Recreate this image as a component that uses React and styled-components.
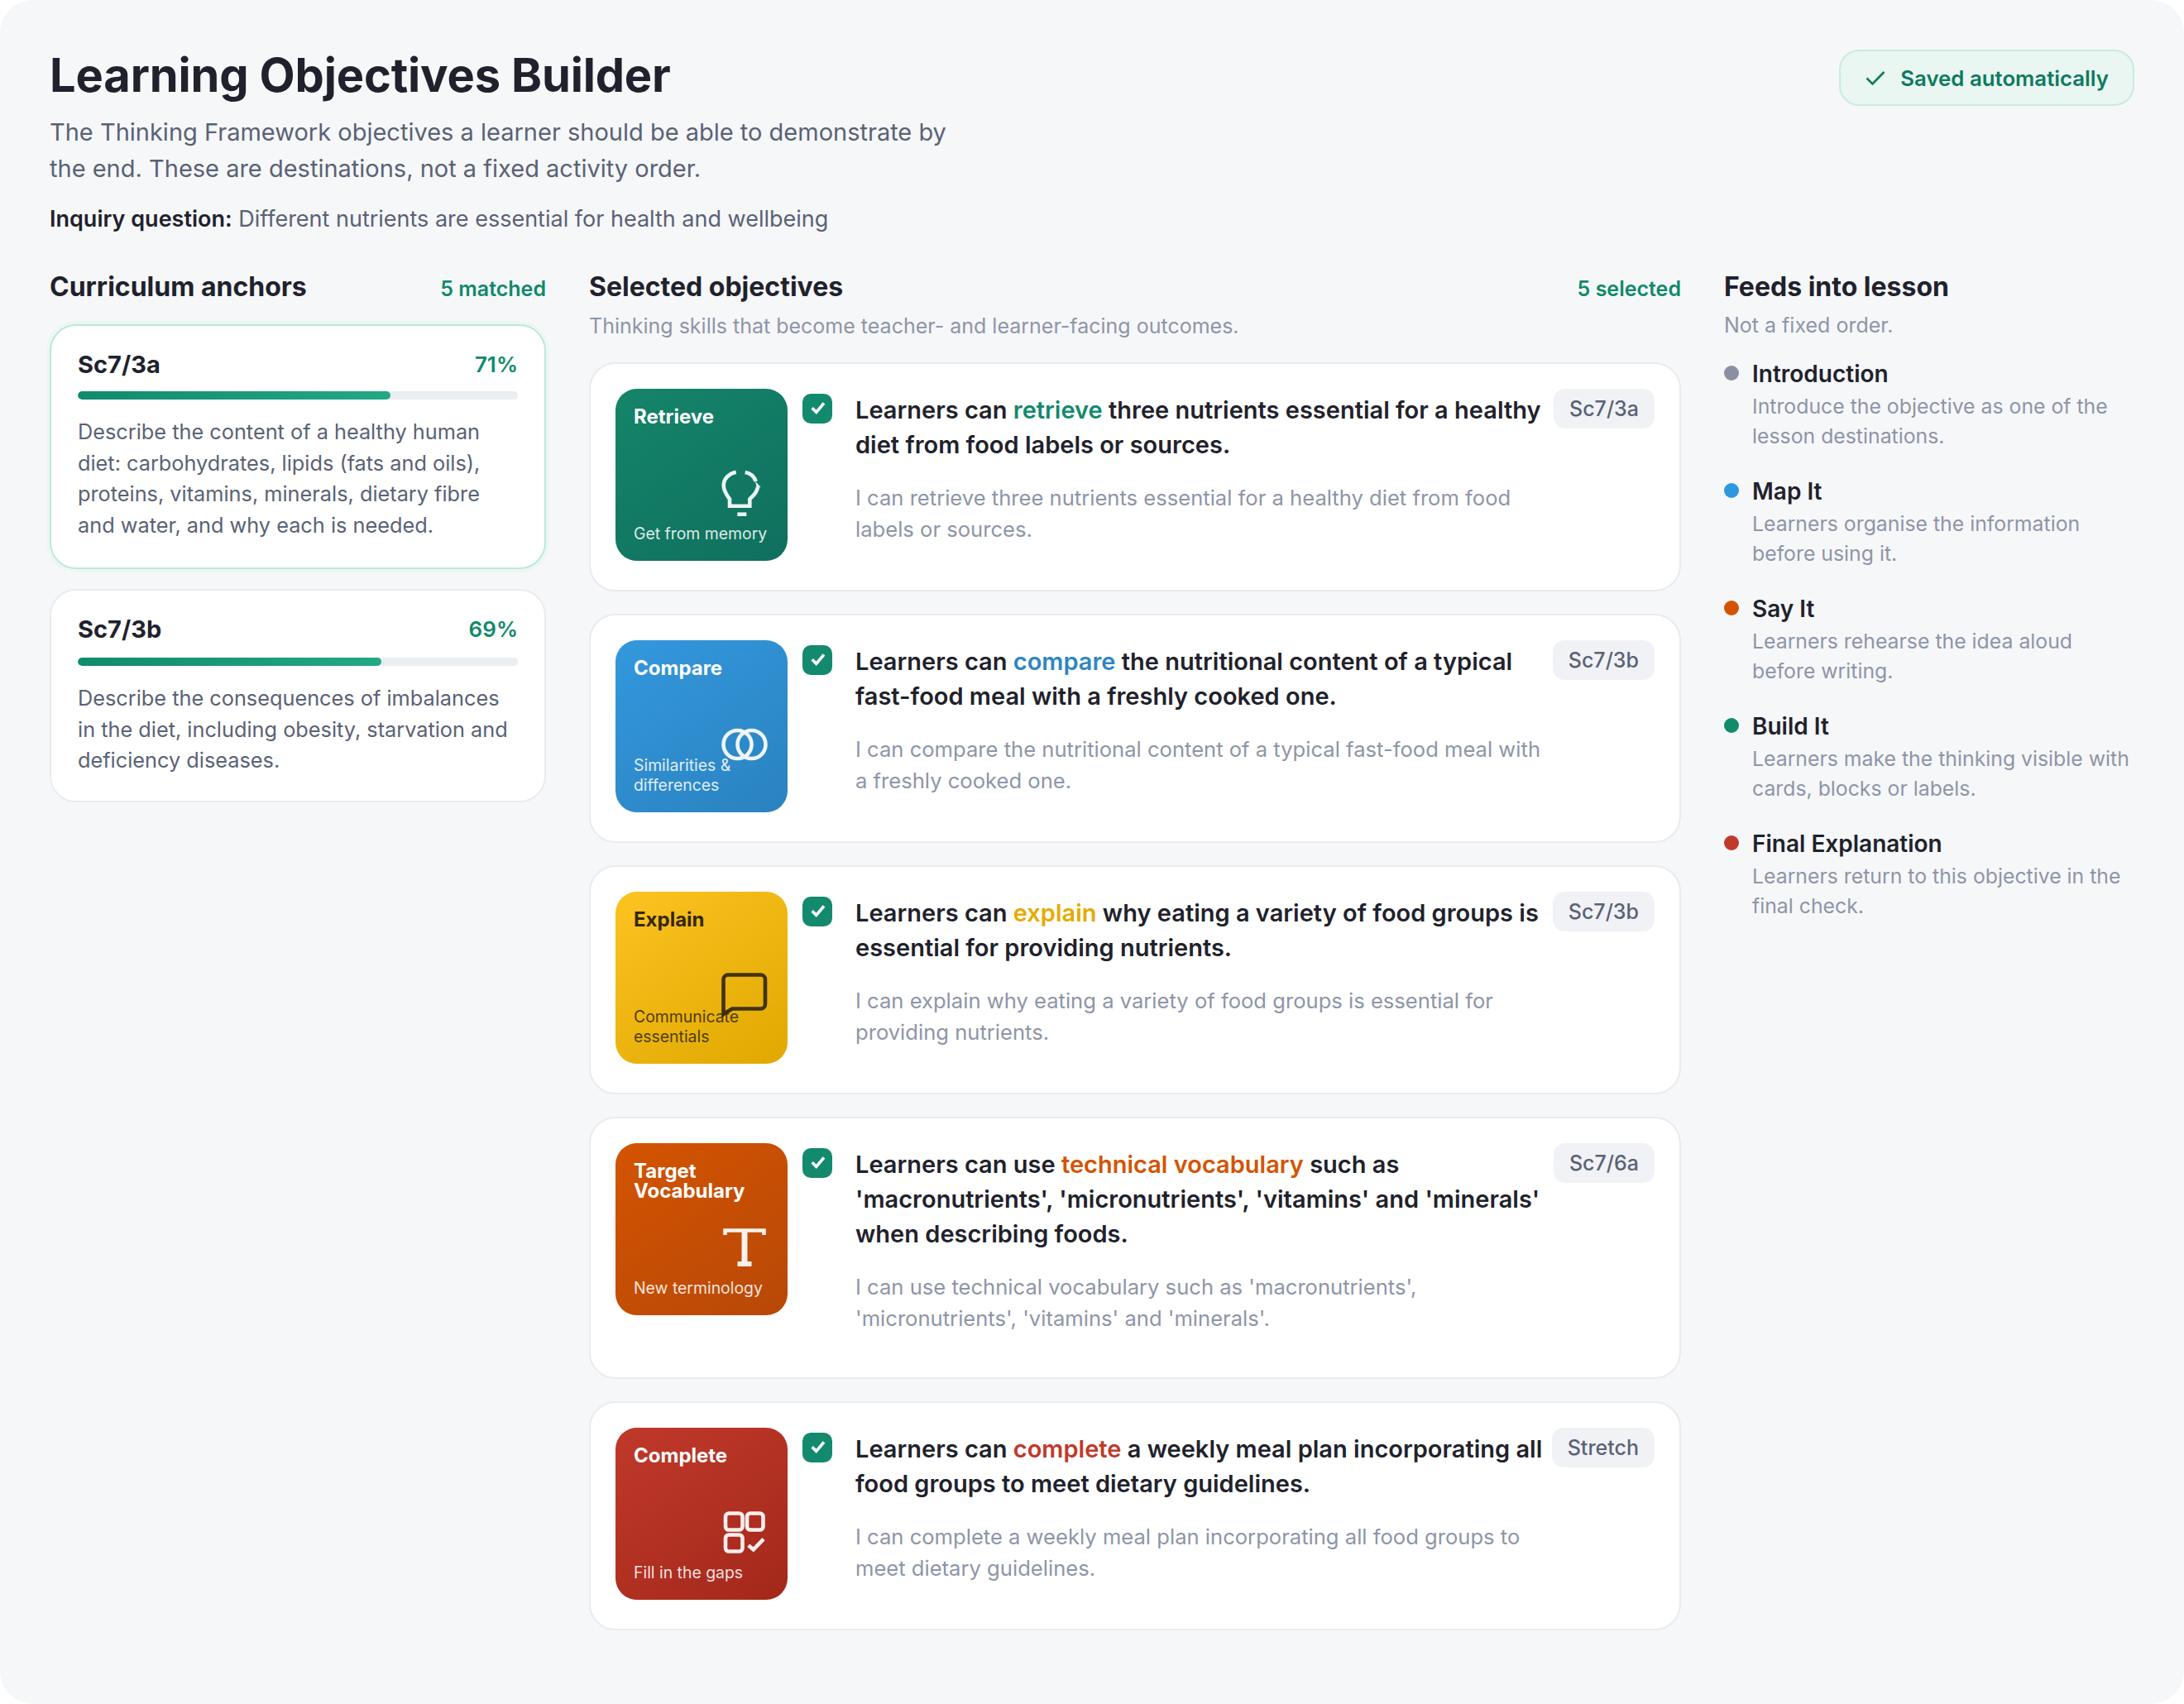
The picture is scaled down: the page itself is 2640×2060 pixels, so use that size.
import React from "react";
import styled, { createGlobalStyle } from "styled-components";

const Global = createGlobalStyle`
  html, body { margin: 0; padding: 0; background: #ffffff; }
  * { box-sizing: border-box; }
  body { font-family: "Inter", "Noto Sans", sans-serif; font-optical-sizing: none; }
`;

const Page = styled.div`
  width: 2640px;
  height: 2060px;
  background: #f6f7f9;
  border-radius: 40px;
  padding: 60px;
  overflow: hidden;
`;
const Header = styled.header`
  display: flex;
  justify-content: space-between;
  align-items: flex-start;
`;
const HeaderText = styled.div`
  max-width: 1120px;
`;
const Title = styled.h1`
  margin: 0;
  font-size: 56px;
  line-height: 62px;
  font-weight: 700;
  letter-spacing: -0.15px;
  color: #1f222c;
`;
const Lead = styled.p`
  margin: 16px 0 0;
  font-size: 29px;
  line-height: 44px;
  color: #5a6275;
`;
const Inquiry = styled.p`
  margin: 19px 0 0;
  font-size: 27px;
  line-height: 40px;
  color: #5a6275;
  strong { color: #1f222c; font-weight: 600; }
`;
const SavedBadge = styled.div`
  display: flex;
  align-items: center;
  gap: 18px;
  height: 68px;
  padding: 0 29px 0 30px;
  background: #e9f6f1;
  border: 2px solid #c9ebdf;
  border-radius: 24px;
  color: #0e7a5f;
  font-size: 25.800px;
  font-weight: 600;
`;
const Columns = styled.div`
  display: grid;
  grid-template-columns: 600px 1fr 496px;
  gap: 52px;
  margin-top: 40px;
  align-items: start;
`;
const Column = styled.section`
  min-width: 0;
`;
const ColumnHead = styled.div`
  display: flex;
  justify-content: space-between;
  align-items: baseline;
  height: 44px;
`;
const ColumnTitle = styled.h2`
  margin: 0;
  font-size: 32px;
  line-height: 44px;
  font-weight: 700;
  color: #1f222c;
`;
const Count = styled.span`
  font-size: 25px;
  font-weight: 600;
  color: #0f8a6a;
`;
const ColumnNote = styled.p`
  margin: 6px 0 0;
  font-size: 25px;
  line-height: 38px;
  color: #8e95a8;
`;
const StageNote = styled(ColumnNote)`
  line-height: 36px;
`;
const AnchorList = styled.div`
  display: flex;
  flex-direction: column;
  gap: 24px;
  margin-top: 23px;
`;
const AnchorCard = styled.article`
  background: #fff;
  border: 2px solid ${(p) => (p.$active ? "#bde8da" : "#e9ebef")};
  box-shadow: ${(p) => (p.$active ? "0 0 0 4px #ecf7f3" : "none")};
  border-radius: 32px;
  padding: 26px 32px ${(p) => (p.$active ? "33px" : "30px")};
`;
const AnchorHead = styled.div`
  display: flex;
  justify-content: space-between;
  align-items: center;
  height: 40px;
`;
const AnchorCode = styled.span`
  font-size: 29px;
  font-weight: 700;
  color: #1f222c;
`;
const AnchorPct = styled.span`
  font-size: 26px;
  font-weight: 600;
  color: #0f8a6a;
`;
const Track = styled.div`
  height: 10px;
  margin-top: ${(p) => (p.$active ? "13px" : "15px")};
  border-radius: 5px;
  background: #eaeef1;
  overflow: hidden;
`;
const Fill = styled.div`
  height: 100%;
  border-radius: 5px;
  background: linear-gradient(90deg, #118a6d, #23a886);
`;
const AnchorText = styled.p`
  margin: 20px 0 0;
  font-size: 25.300px;
  line-height: 37.500px;
  color: #5a6275;
`;
const ObjectiveList = styled.div`
  display: flex;
  flex-direction: column;
  gap: 27px;
  margin-top: 25px;
`;
const ObjectiveCard = styled.article`
  display: flex;
  align-items: flex-start;
  min-height: 277px;
  background: #fff;
  border: 2px solid #e9ebef;
  border-radius: 32px;
  padding: 30px;
`;
const Tile = styled.div`
  position: relative;
  flex: none;
  display: flex;
  flex-direction: column;
  justify-content: space-between;
  width: 208px;
  height: 208px;
  padding: 22px 22px 21px;
  border-radius: 26px;
  background: linear-gradient(145deg, ${(p) => p.$from}, ${(p) => p.$to});
  color: ${(p) => p.$ink};
`;
const TileTitle = styled.div`
  font-size: 24px;
  line-height: 24px;
  font-weight: 700;
`;
const TileNote = styled.div`
  font-size: 19.400px;
  line-height: 24px;
  opacity: 0.85;
`;
const TileIcon = styled.svg`
  position: absolute;
  top: 98px;
  right: 24px;
  width: 56px;
  height: 56px;
  opacity: 0.92;
  fill: none;
  stroke: currentColor;
  stroke-width: 4.600;
`;
const Check = styled.div`
  flex: none;
  display: flex;
  align-items: center;
  justify-content: center;
  width: 36px;
  height: 36px;
  margin: 6px 28px 0 18px;
  border-radius: 10px;
  background: #138a6e;
`;
const ObjectiveBody = styled.div`
  flex: 1;
  min-width: 0;
  padding: 5px 0 22px;
`;
const ObjectiveTitle = styled.h3`
  margin: 0;
  font-size: 29px;
  line-height: 42px;
  font-weight: 600;
  color: #1f222c;
`;
const Verb = styled.span`
  color: ${(p) => p.$color};
`;
const ObjectiveNote = styled.p`
  margin: 24px 0 0;
  font-size: 25.600px;
  line-height: 38px;
  color: #8e95a8;
`;
const CodePill = styled.span`
  flex: none;
  margin-left: 6px;
  display: flex;
  align-items: center;
  height: 48px;
  padding: 0 19px;
  border-radius: 14px;
  background: #f1f2f6;
  color: #5a6275;
  font-size: 25px;
  font-weight: 500;
`;
const Stages = styled.div`
  display: flex;
  flex-direction: column;
  gap: 28px;
  margin-top: 20px;
`;
const Stage = styled.div`
  display: grid;
  grid-template-columns: 18px 1fr;
  column-gap: 16px;
`;
const Dot = styled.span`
  width: 18px;
  height: 18px;
  margin-top: 11px;
  border-radius: 50%;
  background: ${(p) => p.$color};
`;
const StageName = styled.div`
  font-size: 28px;
  line-height: 42px;
  font-weight: 600;
  color: #1f222c;
`;
const StageText = styled.div`
  grid-column: 2;
  font-size: 24.800px;
  line-height: 36px;
  color: #8e95a8;
`;

const icons = {
  bulb: (
    <>
      <path d="M17.700 2.700C9 4.500 2.700 10.700 2.700 18.700c0 6.500 3.500 11.500 7.300 16.600v8.400h24.300v-8.400c3-3.200 8-6 9.700-14.300" />
      <path d="M28.700 3c6 1 11 5 13 11" />
      <path d="M41 13.700 47.700 21l-5 .7z" fill="currentColor" stroke="none" />
      <path d="M19.300 53.700h11" />
    </>
  ),
  venn: (
    <>
      <circle cx="19.500" cy="28" r="17" />
      <circle cx="36.500" cy="28" r="17" />
    </>
  ),
  bubble: <path d="M2.500 50V8a5.500 5.500 0 0 1 5.500-5.500h39.500a5.500 5.500 0 0 1 5.500 5.500v30a5.500 5.500 0 0 1-5.500 5.500H13z" />,
  type: (
    <>
      <path d="M4.500 13V7.500h47V13" />
      <path d="M28 7.500V48" strokeWidth="7" />
      <path d="M19.500 48h17" strokeWidth="6" />
    </>
  ),
  grid: (
    <>
      <rect x="5" y="5.500" width="20.500" height="20" rx="4" />
      <rect x="31" y="5.500" width="19.500" height="20" rx="4" />
      <rect x="5" y="31.500" width="20.500" height="20" rx="4" />
      <path d="M32.700 44.300l6 5L51 36.700" />
    </>
  ),
};

const objectives = [
  {
    tile: "Retrieve", note: "Get from memory", icon: "bulb", from: "#158569", to: "#0f6f5e", ink: "#ffffff", verbColor: "#118a6d",
    verb: "retrieve", before: "Learners can ", after: " three nutrients essential for a healthy diet from food labels or sources.",
    sub: "I can retrieve three nutrients essential for a healthy diet from food labels or sources.", code: "Sc7/3a",
  },
  {
    tile: "Compare", note: "Similarities & differences", icon: "venn", from: "#3398dd", to: "#2a82c0", ink: "#ffffff", verbColor: "#2e86c1",
    verb: "compare", before: "Learners can ", after: " the nutritional content of a typical fast-food meal with a freshly cooked one.",
    sub: "I can compare the nutritional content of a typical fast-food meal with a freshly cooked one.", code: "Sc7/3b",
  },
  {
    tile: "Explain", note: "Communicate essentials", icon: "bubble", from: "#fcc322", to: "#e0a800", ink: "#33280a", verbColor: "#e5ab00",
    verb: "explain", before: "Learners can ", after: " why eating a variety of food groups is essential for providing nutrients.",
    sub: "I can explain why eating a variety of food groups is essential for providing nutrients.", code: "Sc7/3b",
  },
  {
    tile: "Target Vocabulary", note: "New terminology", icon: "type", from: "#d35400", to: "#b84808", ink: "#ffffff", verbColor: "#d35400",
    verb: "technical vocabulary", before: "Learners can use ", after: " such as 'macronutrients', 'micronutrients', 'vitamins' and 'minerals' when describing foods.",
    sub: "I can use technical vocabulary such as 'macronutrients', 'micronutrients', 'vitamins' and 'minerals'.", code: "Sc7/6a",
  },
  {
    tile: "Complete", note: "Fill in the gaps", icon: "grid", from: "#c0392b", to: "#a3281a", ink: "#ffffff", verbColor: "#c0392b",
    verb: "complete", before: "Learners can ", after: " a weekly meal plan incorporating all food groups to meet dietary guidelines.",
    sub: "I can complete a weekly meal plan incorporating all food groups to meet dietary guidelines.", code: "Stretch",
  },
];

const anchors = [
  { code: "Sc7/3a", pct: 71, active: true, text: "Describe the content of a healthy human diet: carbohydrates, lipids (fats and oils), proteins, vitamins, minerals, dietary fibre and water, and why each is needed." },
  { code: "Sc7/3b", pct: 69, active: false, text: "Describe the consequences of imbalances in the diet, including obesity, starvation and deficiency diseases." },
];

const stages = [
  { name: "Introduction", color: "#8a90a2", text: "Introduce the objective as one of the lesson destinations." },
  { name: "Map It", color: "#2d97e0", text: "Learners organise the information before using it." },
  { name: "Say It", color: "#d35400", text: "Learners rehearse the idea aloud before writing." },
  { name: "Build It", color: "#118a6d", text: "Learners make the thinking visible with cards, blocks or labels." },
  { name: "Final Explanation", color: "#c0392b", text: "Learners return to this objective in the final check." },
];

export default function App() {
  return (
    <Page>
      <Global />
      <Header>
        <HeaderText>
          <Title>Learning Objectives Builder</Title>
          <Lead>The Thinking Framework objectives a learner should be able to demonstrate by the end. These are destinations, not a fixed activity order.</Lead>
          <Inquiry><strong>Inquiry question:</strong> Different nutrients are essential for health and wellbeing</Inquiry>
        </HeaderText>
        <SavedBadge>
          <svg width="24" height="24" viewBox="0 0 24 24" fill="none" stroke="#0e7a5f" strokeWidth="2.600"><path d="M1.500 12.500l7 7L22.500 5" /></svg>
          Saved automatically
        </SavedBadge>
      </Header>
      <Columns>
        <Column>
          <ColumnHead>
            <ColumnTitle>Curriculum anchors</ColumnTitle>
            <Count>5 matched</Count>
          </ColumnHead>
          <AnchorList>
            {anchors.map((a) => (
              <AnchorCard key={a.code} $active={a.active}>
                <AnchorHead>
                  <AnchorCode>{a.code}</AnchorCode>
                  <AnchorPct>{a.pct}%</AnchorPct>
                </AnchorHead>
                <Track $active={a.active}><Fill style={{ width: `${a.pct}%` }} /></Track>
                <AnchorText>{a.text}</AnchorText>
              </AnchorCard>
            ))}
          </AnchorList>
        </Column>
        <Column>
          <ColumnHead>
            <ColumnTitle>Selected objectives</ColumnTitle>
            <Count>5 selected</Count>
          </ColumnHead>
          <ColumnNote>Thinking skills that become teacher- and learner-facing outcomes.</ColumnNote>
          <ObjectiveList>
            {objectives.map((o) => (
              <ObjectiveCard key={o.tile}>
                <Tile $from={o.from} $to={o.to} $ink={o.ink}>
                  <TileTitle>{o.tile}</TileTitle>
                  <TileNote>{o.note}</TileNote>
                  <TileIcon viewBox="0 0 56 56">{icons[o.icon]}</TileIcon>
                </Tile>
                <Check>
                  <svg width="36" height="36" viewBox="0 0 36 36" fill="none" stroke="#fff" strokeWidth="3.600"><path d="M11.700 17.300l5 5L26 11.300" /></svg>
                </Check>
                <ObjectiveBody>
                  <ObjectiveTitle>{o.before}<Verb $color={o.verbColor}>{o.verb}</Verb>{o.after}</ObjectiveTitle>
                  <ObjectiveNote>{o.sub}</ObjectiveNote>
                </ObjectiveBody>
                <CodePill>{o.code}</CodePill>
              </ObjectiveCard>
            ))}
          </ObjectiveList>
        </Column>
        <Column>
          <ColumnHead>
            <ColumnTitle>Feeds into lesson</ColumnTitle>
          </ColumnHead>
          <StageNote>Not a fixed order.</StageNote>
          <Stages>
            {stages.map((s) => (
              <Stage key={s.name}>
                <Dot $color={s.color} />
                <StageName>{s.name}</StageName>
                <StageText>{s.text}</StageText>
              </Stage>
            ))}
          </Stages>
        </Column>
      </Columns>
    </Page>
  );
}
